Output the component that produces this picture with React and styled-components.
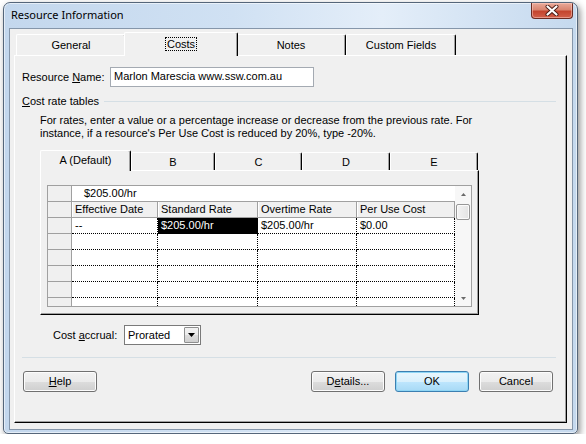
import React from 'react'
import styled, { createGlobalStyle } from 'styled-components'

const GlobalStyle = createGlobalStyle`
    html, body {
        margin: 0;
        padding: 0;
        background: #ffffff;
    }
    body {
        font-family: 'Liberation Sans', Arial, sans-serif;
        font-size: 11px;
        color: #000000;
    }
    * {
        box-sizing: border-box;
    }
`

const Window = styled.div`
    margin: 2px 0 0 3px;
    width: 575px;
    height: 432px;
    border: 1px solid #55667a;
    border-radius: 7px 7px 5px 5px;
    background: linear-gradient(90deg, #c3d7ed 0%, #d0e1f3 40%, #e4eef9 66%, #d5e4f4 82%, #c5d9ee 100%);
    box-shadow: 2px 3px 7px rgba(0, 0, 0, 0.45), inset 0 0 0 1px rgba(255, 255, 255, 0.55);
    display: flex;
    flex-direction: column;
    overflow: hidden;
`

const TitleBar = styled.div`
    height: 25px;
    flex-shrink: 0;
    display: flex;
    align-items: center;
    justify-content: space-between;
    padding: 0 4px 0 7px;
`

const Title = styled.span`
    font-family: 'Noto Sans', 'Open Sans', sans-serif;
    font-size: 11px;
    margin-top: -3px;
`

const CloseButton = styled.div`
    align-self: flex-start;
    width: 42px;
    height: 16px;
    border: 1px solid #6b2b22;
    border-top: none;
    border-radius: 0 0 4px 4px;
    background: linear-gradient(#e9aa9a 0%, #d98570 45%, #c4442d 55%, #d2604a 100%);
    box-shadow: inset 0 0 0 1px rgba(255, 210, 200, 0.5);
    display: flex;
    align-items: center;
    justify-content: center;
`

const Client = styled.div`
    flex: 1;
    margin: 0 4px 3px 5px;
    border: 1px solid #8596aa;
    background: #f0f0f0;
    padding: 3px 5px 6px 4px;
    display: flex;
    flex-direction: column;
`

const TabControl = styled.div`
    flex: 1;
    display: flex;
    flex-direction: column;
`

const TabStrip = styled.div`
    display: flex;
    align-items: flex-end;
    height: ${p => p.$h}px;
    padding-left: ${p => p.$pad || 0}px;
    flex-shrink: 0;
    position: relative;
    z-index: 1;
`

const Tab = styled.div`
    width: ${p => p.$w}px;
    height: ${p => p.$h}px;
    flex-shrink: 0;
    display: flex;
    align-items: center;
    justify-content: center;
    background: #f0f0f0;
    border-top: 1px solid #ffffff;
    border-left: 1px solid #ffffff;
    border-right: 1px solid #000000;
    box-shadow: inset -1px 0 0 #a0a0a0;
    border-radius: 2px 2px 0 0;
    padding-bottom: ${p => p.$pb}px;
    margin: ${p => p.$m || '0'};
    position: relative;
    z-index: ${p => (p.$active ? 2 : 1)};
`

const Focus = styled.span`
    outline: 1px dotted #000000;
    outline-offset: 0;
    padding: 0 1px;
`

const Panel = styled.div`
    flex: ${p => (p.$grow ? 1 : 'none')};
    height: ${p => (p.$h ? `${p.$h}px` : 'auto')};
    border: 1px solid;
    border-color: #ffffff #000000 #000000 #ffffff;
    box-shadow: inset -1px -1px 0 #a0a0a0;
    display: flex;
    flex-direction: column;
    padding: ${p => p.$pad};
`

const NameRow = styled.div`
    display: flex;
    align-items: center;
    height: 20px;
`

const Label = styled.label`
    width: ${p => p.$w}px;
    flex-shrink: 0;
    margin-left: ${p => p.$ml || 0}px;
    margin-top: -1px;
`

const TextInput = styled.div`
    width: 204px;
    height: 20px;
    border: 1px solid #a4aab2;
    background: #ffffff;
    padding-left: 3px;
    line-height: 17px;
`

const GroupHeader = styled.div`
    display: flex;
    align-items: center;
    height: 14px;
    margin-top: 7px;
`

const GroupLine = styled.div`
    flex: 1;
    height: 1px;
    background: #d5dfe5;
    margin-left: 5px;
`

const Hint = styled.p`
    margin: 6px 0 0 18px;
    line-height: 13px;
`

const InnerTabs = styled.div`
    margin: 10px 0 0 18px;
    width: 439px;
    display: flex;
    flex-direction: column;
`

const Grid = styled.div`
    height: 122px;
    border: 1px solid #a0a0a0;
    background: #ffffff;
    display: flex;
`

const GridBody = styled.div`
    flex: 1;
    overflow: hidden;
`

const GridRow = styled.div`
    display: flex;
    height: 16px;
`

const RowHead = styled.div`
    width: 24px;
    flex-shrink: 0;
    background: #f0f0f0;
    border-right: 1px solid #a0a0a0;
    border-bottom: 1px solid #a0a0a0;
`

const EditField = styled.div`
    flex: 1;
    border-bottom: 1px solid #a0a0a0;
    padding-left: 12px;
    line-height: 15px;
`

const HeadCell = styled.div`
    width: ${p => p.$w}px;
    flex-shrink: 0;
    background: #f0f0f0;
    border-right: 1px solid #a0a0a0;
    border-bottom: 1px solid #a0a0a0;
    box-shadow: inset 1px 0 0 #ffffff;
    padding-left: 3px;
    line-height: 15px;
    white-space: nowrap;
`

const Cell = styled.div`
    width: ${p => p.$w}px;
    flex-shrink: 0;
    border-right: 1px dotted #000000;
    border-bottom: 1px dotted #000000;
    padding-left: 3px;
    line-height: 15px;
    white-space: nowrap;
    background: ${p => (p.$selected ? '#000000' : 'transparent')};
    color: ${p => (p.$selected ? '#ffffff' : '#000000')};
`

const ScrollBar = styled.div`
    width: 16px;
    flex-shrink: 0;
    background: #f7f7f7;
    display: flex;
    flex-direction: column;
`

const ArrowButton = styled.div`
    height: 16px;
    display: flex;
    align-items: center;
    justify-content: center;
    margin-top: ${p => (p.$bottom ? 'auto' : '0')};
`

const Thumb = styled.div`
    height: 16px;
    margin: 2px 1px 0 1px;
    border: 1px solid #979797;
    border-radius: 2px;
    background: linear-gradient(90deg, #f4f4f4, #e4e4e4);
    box-shadow: inset 0 0 0 1px #fbfbfb;
`

const AccrualRow = styled.div`
    display: flex;
    align-items: center;
    height: 20px;
    margin-top: 10px;
`

const Select = styled.div`
    width: 77px;
    height: 20px;
    border: 1px solid #7a7a7a;
    background: #ffffff;
    display: flex;
    align-items: center;
    justify-content: space-between;
    padding: 0 1px 0 3px;
`

const DropButton = styled.div`
    width: 15px;
    height: 16px;
    border: 1px solid #8e8f8f;
    border-radius: 1px;
    background: linear-gradient(#f2f2f2 0%, #ebebeb 50%, #dddddd 50%, #cfcfcf 100%);
    display: flex;
    align-items: center;
    justify-content: center;
`

const Separator = styled.div`
    height: 1px;
    background: #d5dfe5;
    margin-top: 12px;
`

const ButtonRow = styled.div`
    display: flex;
    justify-content: space-between;
    margin-top: 13px;
    padding: 0 3px 0 1px;
`

const ButtonGroup = styled.div`
    display: flex;
    gap: 10px;
`

const Button = styled.button`
    width: 74px;
    height: 21px;
    padding: 0 0 1px 0;
    font-family: 'Liberation Sans', Arial, sans-serif;
    font-size: 11px;
    color: #000000;
    border: 1px solid ${p => (p.$default ? '#3c7fb1' : '#707070')};
    border-radius: 3px;
    background: ${p => (p.$default
        ? 'linear-gradient(#eaf6fd 0%, #d9f0fc 50%, #bee6fd 50%, #a7d9f5 100%)'
        : 'linear-gradient(#f2f2f2 0%, #ebebeb 50%, #dddddd 50%, #cfcfcf 100%)')};
    box-shadow: inset 0 0 0 1px ${p => (p.$default ? '#8fd6f5' : '#fcfcfc')};
`

const CloseGlyph = () => (
    <svg width="14" height="11" viewBox="0 0 14 11">
        <path d="M2.5 1.5 L11.5 9.5 M11.5 1.5 L2.5 9.5" stroke="#4a1b14" strokeWidth="4" strokeLinecap="round" />
        <path d="M2.5 1.5 L11.5 9.5 M11.5 1.5 L2.5 9.5" stroke="#ffffff" strokeWidth="2.2" strokeLinecap="round" />
    </svg>
)

const Triangle = ({ up, w, h, color }) => (
    <svg width={w} height={h} viewBox={`0 0 ${w} ${h}`}>
        <path d={up ? `M0 ${h} L${w / 2} 0 L${w} ${h} Z` : `M0 0 L${w} 0 L${w / 2} ${h} Z`} fill={color} />
    </svg>
)

const mainTabs = [
    { label: 'General', w: 110 },
    { label: 'Costs', w: 114, active: true },
    { label: 'Notes', w: 110 },
    { label: 'Custom Fields', w: 110 },
]

const rateTabs = [
    { label: 'A (Default)', w: 91, active: true },
    { label: 'B', w: 84 },
    { label: 'C', w: 87 },
    { label: 'D', w: 88 },
    { label: 'E', w: 88 },
]

const columns = [
    { title: 'Effective Date', w: 86 },
    { title: 'Standard Rate', w: 100 },
    { title: 'Overtime Rate', w: 99 },
    { title: 'Per Use Cost', w: 98 },
]

const rows = [
    ['--', '$205.00/hr', '$205.00/hr', '$0.00'],
    ['', '', '', ''],
    ['', '', '', ''],
    ['', '', '', ''],
    ['', '', '', ''],
    ['', '', '', ''],
]

const App = () => {
    return (
        <>
            <GlobalStyle />
            <Window>
                <TitleBar>
                    <Title>Resource Information</Title>
                    <CloseButton>
                        <CloseGlyph />
                    </CloseButton>
                </TitleBar>
                <Client>
                    <TabControl>
                        <TabStrip $h={23} $pad={2}>
                            {mainTabs.map(t => (
                                <Tab
                                    key={t.label}
                                    $w={t.w}
                                    $h={t.active ? 24 : 21}
                                    $pb={1}
                                    $active={t.active}
                                    $m={t.active ? '0 -2px -1px -2px' : '0'}
                                >
                                    {t.active ? <Focus>{t.label}</Focus> : t.label}
                                </Tab>
                            ))}
                        </TabStrip>
                        <Panel $grow $pad="11px 10px 0 7px">
                            <NameRow>
                                <Label $w={88}>Resource <u>N</u>ame:</Label>
                                <TextInput>Marlon Marescia www.ssw.com.au</TextInput>
                            </NameRow>
                            <GroupHeader>
                                <span><u>C</u>ost rate tables</span>
                                <GroupLine />
                            </GroupHeader>
                            <Hint>
                                For rates, enter a value or a percentage increase or decrease from the previous rate. For
                                <br />
                                instance, if a resource's Per Use Cost is reduced by 20%, type -20%.
                            </Hint>
                            <InnerTabs>
                                <TabStrip $h={20}>
                                    {rateTabs.map(t => (
                                        <Tab
                                            key={t.label}
                                            $w={t.w}
                                            $h={t.active ? 21 : 18}
                                            $pb={t.active ? 2 : 0}
                                            $active={t.active}
                                            $m={t.active ? '0 0 -1px 0' : '0'}
                                        >
                                            {t.label}
                                        </Tab>
                                    ))}
                                </TabStrip>
                                <Panel $h={145} $pad="14px 6px 6px 6px">
                                    <Grid>
                                        <GridBody>
                                            <GridRow>
                                                <RowHead />
                                                <EditField>$205.00/hr</EditField>
                                            </GridRow>
                                            <GridRow>
                                                <RowHead />
                                                {columns.map(c => (
                                                    <HeadCell key={c.title} $w={c.w}>{c.title}</HeadCell>
                                                ))}
                                            </GridRow>
                                            {rows.map((r, i) => (
                                                <GridRow key={i}>
                                                    <RowHead />
                                                    {r.map((v, j) => (
                                                        <Cell key={j} $w={columns[j].w} $selected={i === 0 && j === 1}>
                                                            {v}
                                                        </Cell>
                                                    ))}
                                                </GridRow>
                                            ))}
                                        </GridBody>
                                        <ScrollBar>
                                            <ArrowButton>
                                                <Triangle up w={5} h={3} color="#6a6a6a" />
                                            </ArrowButton>
                                            <Thumb />
                                            <ArrowButton $bottom>
                                                <Triangle w={5} h={3} color="#6a6a6a" />
                                            </ArrowButton>
                                        </ScrollBar>
                                    </Grid>
                                </Panel>
                            </InnerTabs>
                            <AccrualRow>
                                <Label $w={71} $ml={31}>Cost <u>a</u>ccrual:</Label>
                                <Select>
                                    <span>Prorated</span>
                                    <DropButton>
                                        <Triangle w={7} h={4} color="#000000" />
                                    </DropButton>
                                </Select>
                            </AccrualRow>
                            <Separator />
                            <ButtonRow>
                                <Button><u>H</u>elp</Button>
                                <ButtonGroup>
                                    <Button>D<u>e</u>tails...</Button>
                                    <Button $default>OK</Button>
                                    <Button>Cancel</Button>
                                </ButtonGroup>
                            </ButtonRow>
                        </Panel>
                    </TabControl>
                </Client>
            </Window>
        </>
    )
}

export default App
